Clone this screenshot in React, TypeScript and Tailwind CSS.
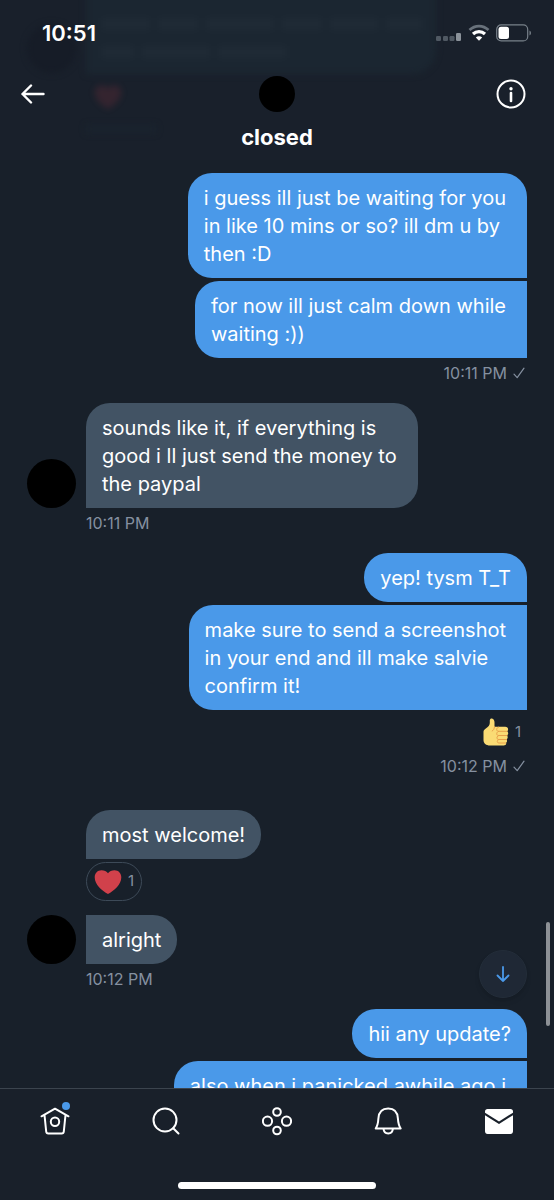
import { clsx } from 'clsx';

interface BubbleProps {
  lines: string[];
  mine?: boolean;
  wide?: boolean;
  shape: string;
}

function Bubble({ lines, mine, wide, shape }: BubbleProps) {
  return (
    <p
      className={clsx(
        'w-fit max-w-[380px] whitespace-pre-line pb-[10px] pl-4 pt-[11px] text-[20px] leading-[28px] text-white',
        mine ? 'bg-[#4a99e9]' : 'bg-[#425364]',
        wide || lines.length > 1 ? 'pr-[21px]' : 'pr-4',
        shape,
      )}
    >
      {lines.join('\n')}
    </p>
  );
}

function Avatar() {
  return <div className="size-[49px] shrink-0 rounded-full bg-black" />;
}

function SentMark() {
  return (
    <svg viewBox="0 0 12 12" className="size-3" fill="none" stroke="currentColor" strokeWidth="1.2" aria-label="Sent">
      <path d="M1 7.2 4.2 10.6 11 1.2" strokeLinecap="round" strokeLinejoin="round" />
    </svg>
  );
}

function Time({ value, sent }: { value: string; sent?: boolean }) {
  return (
    <div className={clsx('flex h-[29px] items-center gap-[6px] text-[16px] leading-[20px] text-[#8590a0]', sent && '-mt-[3px] pr-[2px]')}>
      <time>{value}</time>
      {sent && <SentMark />}
    </div>
  );
}

function Heart() {
  return (
    <svg viewBox="0 0 28 26" className="h-[26px] w-7" aria-hidden="true">
      <path
        d="M27.300 8.200C27.300 4 24.300 1.200 20.600 1.200 17.800 1.200 15.300 2.200 14 4.200 12.700 2.200 10.200 1.200 7.400 1.200 3.700 1.200.7 4 .7 8.200c0 7.400 7.300 13.600 13.300 16.800 6-3.200 13.300-9.400 13.300-16.800Z"
        fill="#d1414b"
      />
    </svg>
  );
}

function ThumbsUp() {
  return (
    <svg viewBox="0 0 26 28" className="h-7 w-[26px]" aria-hidden="true">
      <path
        d="M6.800 2.200C7 .8 8.300.3 9.500.8c1.400.6 2 2 2 3.700v4.300h10.700c1.900 0 2.900 1 2.900 2.400 0 1-.4 1.600-1 2 .8.500 1.100 1.200 1.100 2.100 0 1-.5 1.700-1.200 2.100.5.500.7 1.100.7 1.800 0 1-.5 1.600-1.200 2 .4.400.5 1 .5 1.700 0 1-.5 1.500-1 1.800.2.300.3.700.2 1.100-.2 1.300-1.200 1.700-2.500 1.700H7C3 27.500.5 25.300.5 22v-8c0-1.500.7-2.300 2-3.200C5.500 8.800 6.700 7 6.800 5Z"
        fill="#fadb74"
      />
      <path
        d="M11.500 8.800c-.2 2.200-1 3.400-2.300 4.200M24 13.300h-8.300c-2.700 0-2.700-3.400-.2-4.200M24 17.500h-8.300c-2.700 0-2.700-3.500 0-4.200M23.500 21.500h-7.800c-2.400 0-2.400-3.300 0-4M22.700 25h-6.800c-2.200 0-2.200-2.900-.2-3.500"
        fill="none"
        stroke="#e8a04a"
        strokeWidth="1"
        strokeLinecap="round"
      />
    </svg>
  );
}

function StatusIcons() {
  return (
    <div className="flex items-center gap-[6px]">
      <svg viewBox="0 0 26 18" className="h-[18px] w-[26px]" aria-label="Signal">
        <rect x="1" y="12" width="5" height="5" rx="1.200" fill="#505963" />
        <rect x="8" y="12" width="5" height="5" rx="1.200" fill="#505963" />
        <rect x="14.500" y="12" width="5" height="5" rx="1.200" fill="#505963" />
        <rect x="21" y="9" width="5" height="8" rx="1.200" fill="#8b929a" />
      </svg>
      <svg viewBox="0 0 22 18" className="ml-[1px] h-[18px] w-[22px]" fill="none" aria-label="Wi-Fi">
        <path d="M1.500 6C7 .8 15 .8 20.500 6" stroke="#68717b" strokeWidth="2.800" />
        <path d="M5 10c3.500-3.200 8.500-3.200 12 0" stroke="#fff" strokeWidth="3.200" />
        <path d="M7.800 13.400c1.900-1.700 4.500-1.700 6.400 0L11 16.800Z" fill="#fff" />
      </svg>
      <svg viewBox="0 0 36 18" className="h-[18px] w-9" aria-label="Battery">
        <rect x=".7" y=".9" width="31" height="16" rx="4.500" fill="none" stroke="#78818a" strokeWidth="1.200" />
        <rect x="2.500" y="2.800" width="10.500" height="12.200" rx="2.500" fill="#fff" />
        <path d="M33.500 6.500c2 1 2 4 0 5Z" fill="#78818a" />
      </svg>
    </div>
  );
}

function Header() {
  return (
    <header className="relative h-[160px] shrink-0 overflow-hidden bg-[#19202b] text-white">
      {/* older messages showing faintly through the bar */}
      <div className="absolute inset-0 blur-[3px]" aria-hidden="true">
        <div className="absolute left-[27px] top-[24px] size-[49px] rounded-full bg-[#161c27]" />
        <div className="absolute left-[86px] top-[-30px] flex h-[104px] w-[350px] flex-col justify-end gap-4 rounded-3xl rounded-bl-none bg-[#1b2631] pb-4 pl-4">
          <div className="flex gap-2">
            <div className="h-3 w-12 bg-[#1f2a35]" />
            <div className="h-3 w-10 bg-[#1f2a35]" />
            <div className="h-3 w-[68px] bg-[#1f2a35]" />
            <div className="h-3 w-10 bg-[#1f2a35]" />
            <div className="h-3 w-12 bg-[#1f2a35]" />
            <div className="h-3 w-9 bg-[#1f2a35]" />
          </div>
          <div className="flex gap-2">
            <div className="h-3 w-8 bg-[#1f2a35]" />
            <div className="h-3 w-[68px] bg-[#1f2a35]" />
            <div className="h-3 w-[68px] bg-[#1f2a35]" />
          </div>
        </div>
        <div className="absolute left-[94px] top-[84px] opacity-15">
          <Heart />
        </div>
        <div className="absolute left-[86px] top-[125px] h-2 w-[70px] bg-[#1a232e]" />
      </div>
      <div className="relative flex h-[66px] items-center justify-between pl-[42px] pr-[22px]">
        <time className="text-[22px] font-semibold leading-6">10:51</time>
        <StatusIcons />
      </div>
      <div className="relative flex items-start justify-between pl-5 pr-7 pt-[10px]">
        <button type="button" aria-label="Back" className="flex h-9 w-[38px] items-center">
          <svg viewBox="0 0 26 20" className="h-5 w-[26px]" fill="none" stroke="#fff" strokeWidth="2.400">
            <path d="M23.500 10H2.500M11 1.500 2.500 10l8.500 8.500" strokeLinecap="round" strokeLinejoin="round" />
          </svg>
        </button>
        <div className="flex flex-col items-center gap-[11px]">
          <div className="size-9 rounded-full bg-black" />
          <h1 className="text-[22px] font-bold leading-7">closed</h1>
        </div>
        <button type="button" aria-label="Conversation info" className="flex h-9 w-[30px] items-center justify-end">
          <svg viewBox="0 0 30 30" className="size-[30px]" fill="none" stroke="#fff" strokeWidth="2">
            <circle cx="15" cy="15" r="13.500" />
            <path d="M15 14v8" strokeWidth="2.600" strokeLinecap="round" />
            <circle cx="15" cy="9.700" r="1.700" fill="#fff" stroke="none" />
          </svg>
        </button>
      </div>
    </header>
  );
}

function TabBar() {
  const tab = 'flex h-[34px] flex-1 items-center justify-center';
  const icon = 'size-[30px]';
  return (
    <footer className="h-[112px] shrink-0 border-t border-[#3b444e] bg-[#19202a]">
      <nav className="flex pt-[15px]">
        <a href="#home" aria-label="Home" className={tab}>
          <span className="relative">
            <svg viewBox="0 0 30 30" className={icon} fill="none" stroke="#fff" strokeWidth="2" strokeLinecap="round" strokeLinejoin="round">
              <path d="M1.500 10.300 15 2.700l13.500 7.600M4.500 9l1.700 16.500c.1 1.200.9 2 2.100 2h13.400c1.200 0 2-.8 2.100-2L25.500 9" />
              <circle cx="15" cy="15.800" r="4.200" />
            </svg>
            <span className="absolute right-0 -top-1 size-2 rounded-full bg-[#4a99e9]" />
          </span>
        </a>
        <a href="#search" aria-label="Search" className={tab}>
          <svg viewBox="0 0 30 30" className={icon} fill="none" stroke="#fff" strokeWidth="2" strokeLinecap="round">
            <circle cx="14" cy="14" r="11.500" />
            <path d="m22.200 22.200 5.300 5.300" />
          </svg>
        </a>
        <a href="#spaces" aria-label="Spaces" className={tab}>
          <svg viewBox="0 0 30 30" className={icon} fill="none" stroke="#fff" strokeWidth="2">
            <circle cx="15" cy="6" r="3.800" />
            <circle cx="15" cy="24.500" r="3.800" />
            <circle cx="5.500" cy="15.200" r="4.600" />
            <circle cx="24.500" cy="15.200" r="4.600" />
          </svg>
        </a>
        <a href="#notifications" aria-label="Notifications" className={tab}>
          <svg viewBox="0 0 30 30" className={icon} fill="none" stroke="#fff" strokeWidth="2" strokeLinejoin="round">
            <path d="M2.700 22.500C4.800 19.500 5.100 17 5.400 12.500 5.800 6 9.300 2.500 15.200 2.500S24.500 6 24.900 12.500c.3 4.500.7 7 2.800 10Z" />
            <path d="M10.500 22.500c.2 3 2 5 4.700 5s4.500-2 4.700-5" />
          </svg>
        </a>
        <a href="#messages" aria-label="Messages" className={tab}>
          <svg viewBox="0 0 30 30" className={icon} fill="#fff">
            <path d="M1 5.500C1 4 2 3 3.500 3h23C28 3 29 4 29 5.500v1.200L15 15.500 1 6.700Z" />
            <path d="M1 9.200v16C1 26.700 2 28 3.500 28h23c1.500 0 2.500-1.300 2.500-2.800v-16L15 18Z" />
          </svg>
        </a>
      </nav>
      <div className="mx-auto mt-11 h-[7px] w-[198px] rounded-full bg-white" />
    </footer>
  );
}

export default function App() {
  return (
    <div className="relative flex h-screen flex-col overflow-hidden bg-[#18202a] font-['Inter',sans-serif]">
      <Header />
      <main className="relative min-h-0 flex-1 overflow-hidden px-[27px] pt-[13px]">
        <section className="flex flex-col items-end gap-[3px]">
          <Bubble mine shape="rounded-3xl rounded-br-none" lines={['i guess ill just be waiting for you', 'in like 10 mins or so? ill dm u by', 'then :D']} />
          <Bubble mine shape="rounded-l-3xl" lines={['for now ill just calm down while', 'waiting :))']} />
          <Time value="10:11 PM" sent />
        </section>

        <section className="mt-4">
          <div className="flex items-end gap-[10px]">
            <Avatar />
            <Bubble shape="rounded-3xl rounded-bl-none" lines={['sounds like it, if everything is', 'good i ll just send the money to', 'the paypal']} />
          </div>
          <div className="pl-[59px]">
            <Time value="10:11 PM" />
          </div>
        </section>

        <section className="mt-4 flex flex-col items-end gap-[3px]">
          <Bubble mine shape="rounded-3xl rounded-br-none" lines={['yep! tysm T_T']} />
          <Bubble mine shape="rounded-l-3xl" lines={['make sure to send a screenshot', 'in your end and ill make salvie', 'confirm it!']} />
          <button type="button" className="flex h-[38px] items-center gap-[6px] px-[6px] text-[15px] text-[#8590a0]">
            <ThumbsUp />1
          </button>
          <Time value="10:12 PM" sent />
        </section>

        <section className="mt-[30px]">
          <div className="pl-[59px]">
            <Bubble shape="rounded-3xl rounded-bl-none" lines={['most welcome!']} />
            <button
              type="button"
              className="mt-[3px] flex h-[39px] w-14 items-center justify-center gap-[6px] rounded-full border border-[#3d4a58] text-[15px] text-[#8590a0]"
            >
              <Heart />1
            </button>
          </div>
          <div className="mt-[14px] flex items-end gap-[10px]">
            <Avatar />
            <Bubble shape="rounded-r-3xl" lines={['alright']} />
          </div>
          <div className="pl-[59px]">
            <Time value="10:12 PM" />
          </div>
        </section>

        <section className="mt-4 flex flex-col items-end gap-[3px]">
          <Bubble mine shape="rounded-3xl rounded-br-none" lines={['hii any update?']} />
          <Bubble mine wide shape="rounded-tl-3xl" lines={['also when i panicked awhile ago i']} />
        </section>

        <button
          type="button"
          aria-label="Scroll to latest"
          className="absolute bottom-[90px] right-[27px] flex size-12 items-center justify-center rounded-full border border-[#232d39] bg-[#1f2835] shadow-md"
        >
          <svg viewBox="0 0 14 16" className="h-4 w-[14px]" fill="none" stroke="#4a99e9" strokeWidth="1.800">
            <path d="M7 1v14M1.500 9.500 7 15l5.500-5.500" strokeLinecap="round" strokeLinejoin="round" />
          </svg>
        </button>
        <div className="absolute bottom-[62px] right-1 h-[104px] w-1 rounded-full bg-[#8d9196]" />
      </main>
      <TabBar />
    </div>
  );
}
